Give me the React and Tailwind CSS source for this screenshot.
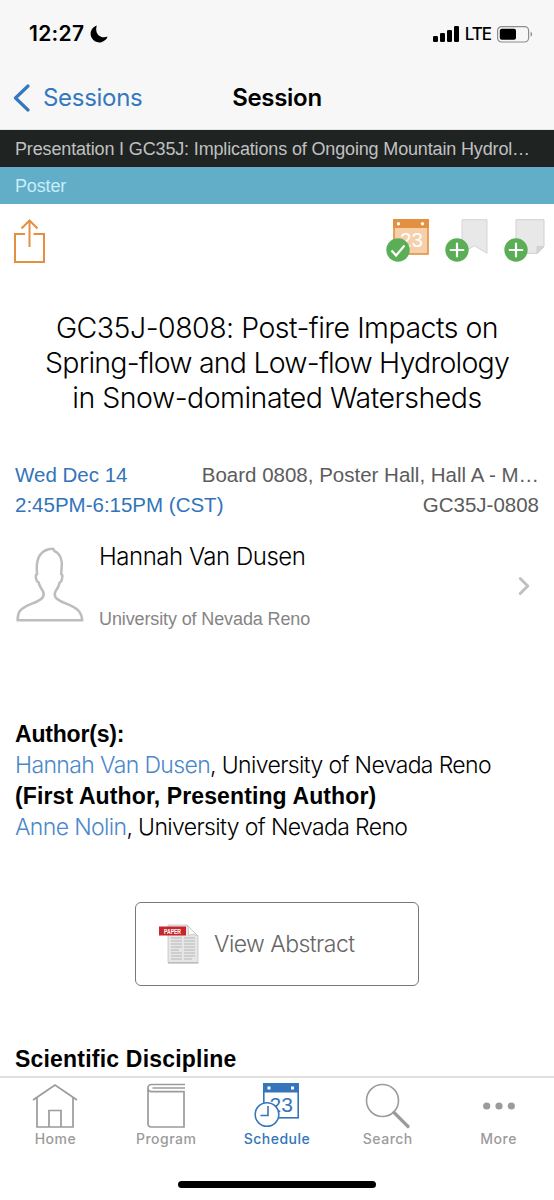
import { ChevronRight } from 'lucide-react';

const StatusBar = () => (
  <div className="flex h-[68px] items-center justify-between pl-[29px] pr-[21px]">
    <div className="flex items-center gap-[6px]">
      <span className="text-[21px] font-semibold leading-6 tracking-[0.3px]">12:27</span>
      <svg width="18" height="18" viewBox="0 0 18 18" fill="#000">
        <path d="M6.800.4A8.700 8.700 0 1 0 17.600 11.400C11.500 14.200 4 9.500 6.800.4Z" />
      </svg>
    </div>
    <div className="flex items-center gap-[6px]">
      <svg width="26" height="16" viewBox="0 0 26 16" fill="#000">
        <rect x="0" y="10" width="5" height="6" rx="1.3" />
        <rect x="7" y="7" width="5" height="9" rx="1.3" />
        <rect x="14" y="4" width="5" height="12" rx="1.3" />
        <rect x="21" y="0" width="5" height="16" rx="1.3" />
      </svg>
      <span className="text-[17px] font-medium leading-6 tracking-[-1px]">LTE</span>
      <svg width="36" height="17" viewBox="0 0 36 17">
        <rect x="0.6" y="0.6" width="31" height="15.4" rx="4" fill="none" stroke="#8d8d8d" strokeWidth="1.2" />
        <rect x="2.8" y="2.8" width="16.2" height="11" rx="2" fill="#000" />
        <path d="M33.6 5.8c2 .8 2 4.2 0 5Z" fill="#8d8d8d" />
      </svg>
    </div>
  </div>
);

const NavBar = () => (
  <div className="grid h-[60px] grid-cols-3 items-center">
    <button className="flex items-center gap-[13px] pl-[13px] text-[#3478bf]">
      <svg width="17" height="28" viewBox="0 0 17 28" fill="none" stroke="currentColor" strokeWidth="3.2" strokeLinecap="round" strokeLinejoin="round">
        <path d="M15 2 2.5 14 15 26" />
      </svg>
      <span className="text-[24px] leading-7 tracking-[-0.3px]">Sessions</span>
    </button>
    <h1 className="text-center text-[24px] font-semibold leading-7 tracking-[-0.3px]">Session</h1>
  </div>
);

const ShareIcon = () => (
  <svg width="33" height="45" viewBox="0 0 33 45" fill="none" stroke="#e39140" strokeWidth="2">
    <path d="M12 15H2v28h29V15H20.5" />
    <path d="M16.5 28V2M8.5 9.5l8-8 8 8" />
  </svg>
);

const Badge = ({ children }) => (
  <svg width="24" height="24" viewBox="0 0 24 24" className="absolute bottom-0 left-0">
    <circle cx="12" cy="12" r="11.7" fill="#5aae55" />
    <path d={children} fill="none" stroke="#fff" strokeWidth="2.2" />
  </svg>
);

const CHECK = 'M5.5 12.5l4.6 5 8.4-10';
const PLUS = 'M12 4.8v14.4M4.8 12h14.4';

const ActionIcons = () => (
  <div className="flex">
    <div className="relative h-[43px] w-[59px]">
      <svg width="43" height="43" viewBox="0 0 43 43">
        <rect x="8" y="1" width="34" height="34" fill="#f6cfab" stroke="#e39140" strokeWidth="1.6" />
        <rect x="7" y="0" width="36" height="9" fill="#e39140" />
        <circle cx="12.5" cy="4.7" r="1.7" fill="#fff" />
        <circle cx="36.5" cy="4.7" r="1.7" fill="#fff" />
        <text x="14" y="28" fill="#fff" fontSize="20.5" fontFamily="Liberation Sans">23</text>
      </svg>
      <Badge>{CHECK}</Badge>
    </div>
    <div className="relative h-[43px] w-[59px]">
      <svg width="43" height="43" viewBox="0 0 43 43" fill="#e8e8e9" stroke="#d4d4d6">
        <path d="M17 .7h25v33.6l-12.5-7.5L17 34Z" />
      </svg>
      <Badge>{PLUS}</Badge>
    </div>
    <div className="relative h-[43px] w-[41px]">
      <svg width="41" height="43" viewBox="0 0 41 43" fill="#e8e8e9" stroke="#d0d0d2">
        <path d="M12 .7h28v26.8l-7 6.9H12Z" />
        <path d="M40 27.5h-7v6.9Z" fill="#d4d4d6" />
      </svg>
      <Badge>{PLUS}</Badge>
    </div>
  </div>
);

const PersonIcon = () => (
  <svg width="68" height="75" viewBox="0 0 68 75" fill="none" stroke="#bdbdbd" strokeWidth="2.5" strokeLinejoin="round" className="mb-[3px]">
    <path d="M1.5 73.3C2 65 4 62.5 9 59.8c7-3.6 15-5.3 17.8-9.6 1.5-2.4 1-4.2.2-6-2-3-3.7-5.6-4.3-8.8-1.7-.3-3.2-4-2.9-6.6.1-1.6.8-1.6 1.300-1.600C19.500 14 23 5 32.500 2.300c2-.5 3.500-.7 4.700-.4l1.200 2.200c5.700 2.200 8 8.800 7.300 15.800l-.5 7.300c1.600.2 1.300 2 .8 4.600-.4 2-1.400 3.500-2.300 3.600-.6 3.200-2 6-4.200 8.800-1 2-1.400 3.600 0 6 2.800 4.300 10.800 6 17.800 9.600 5 2.700 8 5.200 9 13.500Z" />
  </svg>
);

const PaperIcon = () => (
  <svg width="40" height="40" viewBox="0 0 40 40">
    <path d="M9 1h19l11 11v26.5H9Z" fill="#e6e6e6" stroke="#c4c4c4" strokeWidth=".8" />
    <path d="M28 1c2 4 2 7 1 10.5 3-1.5 7-1.5 10 .5Z" fill="#fafafa" stroke="#b5b5b5" strokeWidth=".6" />
    <path d="M12 14h11M12 17h11M12 20h11M12 23h11M12 26h8M12 29h11M12 32h11M12 35h11M25 14h11M25 17h11M25 20h11M25 23h11M25 26h11M25 29h11M25 32h11M25 35h8" stroke="#c6c6c6" strokeWidth="1.3" />
    <path d="M9 39h30.5" stroke="#aaa" />
    <rect y="2.5" width="27" height="9" fill="#c8262c" />
    <text x="5" y="9.6" fill="#fff" fontSize="7" fontWeight="700" fontFamily="Liberation Sans" textLength="17" lengthAdjust="spacingAndGlyphs">PAPER</text>
  </svg>
);

const HomeIcon = () => (
  <svg width="46" height="46" viewBox="0 0 46 46" fill="none" stroke="currentColor" strokeWidth="1.7">
    <path d="M1 17 23 2l22 15M5 15v29h36V15" />
    <path d="M17 44V27.5h12V44" />
  </svg>
);

const ProgramIcon = () => (
  <svg width="46" height="46" viewBox="0 0 46 46" fill="none" stroke="currentColor" strokeWidth="1.7">
    <path d="M42 1.5H8.5a3.6 3.6 0 0 0 0 7.2H41V44H8a3 3 0 0 1-3-3V5" />
    <path d="M42 5H9.5" strokeWidth="1.3" />
  </svg>
);

const ScheduleIcon = () => (
  <svg width="46" height="46" viewBox="0 0 46 46" fill="none" stroke="currentColor" strokeWidth="1.6">
    <rect x="9.8" y="1.8" width="34.4" height="33" />
    <path d="M9 0h36v9.5H9Z" fill="currentColor" stroke="none" />
    <rect x="13.5" y="3.500" width="3" height="3" fill="#fff" stroke="none" />
    <rect x="37" y="3.500" width="3" height="3" fill="#fff" stroke="none" />
    <text x="15.5" y="28.5" fill="currentColor" stroke="none" fontSize="21" fontFamily="Liberation Sans">23</text>
    <circle cx="13" cy="31.500" r="11.8" fill="#fff" />
    <path d="M14 23v9.500H6.5" />
  </svg>
);

const SearchIcon = () => (
  <svg width="46" height="46" viewBox="0 0 46 46" fill="none" stroke="currentColor">
    <circle cx="17.5" cy="17.5" r="16" strokeWidth="1.6" />
    <path d="M29 29.5l14 14" strokeWidth="3.2" strokeLinecap="round" />
  </svg>
);

const MoreIcon = () => (
  <svg width="46" height="46" viewBox="0 0 46 46" fill="currentColor">
    <circle cx="10.7" cy="23" r="3.6" />
    <circle cx="23" cy="23" r="3.6" />
    <circle cx="35.3" cy="23" r="3.6" />
  </svg>
);

const tabs = [
  { label: 'Home', Icon: HomeIcon },
  { label: 'Program', Icon: ProgramIcon },
  { label: 'Schedule', Icon: ScheduleIcon, active: true },
  { label: 'Search', Icon: SearchIcon },
  { label: 'More', Icon: MoreIcon },
];

const TabBar = () => (
  <nav className="h-[124px] shrink-0 border-t-2 border-[#e0e0e1] bg-white">
    <div className="grid grid-cols-5 pt-[5px]">
      {tabs.map(({ label, Icon, active }) => (
        <button
          key={label}
          className={`flex flex-col items-center ${active ? 'text-[#3475bb]' : 'text-[#9b9b9b]'}`}
        >
          <Icon />
          <span className="text-[14px] font-medium leading-[20px] tracking-[0.5px]">{label}</span>
        </button>
      ))}
    </div>
    <div className="mx-auto mt-[32px] h-[7px] w-[198px] rounded-full bg-black" />
  </nav>
);

const App = () => {
  return (
    <div className="flex h-[1200px] w-[554px] flex-col overflow-hidden whitespace-nowrap bg-white font-['Inter',sans-serif] text-black">
      <header className="h-[130px] shrink-0 border-b border-[#e4e6e6] bg-[#f7f7f7]">
        <StatusBar />
        <NavBar />
      </header>

      <div className="h-[37px] shrink-0 bg-[#1f2322] px-[15px] font-['Liberation_Sans',sans-serif] text-[18px] leading-[39px] tracking-[-0.15px] text-[#c0c1c1]">
        Presentation I GC35J: Implications of Ongoing Mountain Hydrol…
      </div>
      <div className="h-[37px] shrink-0 bg-[#62adc8] px-[15px] font-['Liberation_Sans',sans-serif] text-[18px] leading-[39px] tracking-[-0.15px] text-[#c7eef9]">
        Poster
      </div>

      <main className="flex-1 overflow-hidden font-['Liberation_Sans',sans-serif]">
        <div className="flex items-start justify-between pl-[13px] pr-[9px] pt-[15px]">
          <ShareIcon />
          <ActionIcons />
        </div>

        <h2 className="mt-[46px] text-center font-['Inter',sans-serif] text-[28.5px] font-light leading-[35px] tracking-[-0.5px]">
          GC35J-0808: Post-fire Impacts on
          <br />
          <span className="tracking-[-0.78px]">Spring-flow and Low-flow Hydrology</span>
          <br />
          in Snow-dominated Watersheds
        </h2>

        <div className="mt-[45px] px-[15px] text-[20.5px] leading-[30px]">
          <div className="flex justify-between">
            <p className="text-[#3274b9]">Wed Dec 14</p>
            <p className="text-[#5c5c5c]">Board 0808, Poster Hall, Hall A - M…</p>
          </div>
          <div className="flex justify-between">
            <p className="text-[#3274b9]">2:45PM-6:15PM (CST)</p>
            <p className="text-[#5c5c5c]">GC35J-0808</p>
          </div>
        </div>

        <div className="mt-[21px] flex h-[90px] items-center pl-[16px] pr-[15px]">
          <PersonIcon />
          <div className="ml-[15px] flex-1">
            <p className="font-['Inter',sans-serif] text-[24px] font-light leading-[32px] tracking-[-0.48px]">Hannah Van Dusen</p>
            <p className="mt-[34px] text-[18px] leading-[24px] tracking-[-0.12px] text-[#858585]">University of Nevada Reno</p>
          </div>
          <ChevronRight className="h-[30px] w-[30px] text-[#c0c0c0]" strokeWidth={2.4} />
        </div>

        <div className="mt-[88px] pl-[15px] font-['Inter',sans-serif] text-[23px] font-light leading-[31px] tracking-[-0.63px]">
          <p className="font-['Liberation_Sans',sans-serif] font-bold tracking-[-0.2px]">Author(s):</p>
          <p><a className="text-[#4a88cb]">Hannah Van Dusen</a>, University of Nevada Reno</p>
          <p className="font-['Liberation_Sans',sans-serif] font-bold tracking-[0.12px]">(First Author, Presenting Author)</p>
          <p><a className="text-[#4a88cb]">Anne Nolin</a>, University of Nevada Reno</p>
        </div>

        <button className="mx-auto mt-[59px] flex h-[84px] w-[284px] items-center rounded-[6px] border-[1.5px] border-[#777] pl-[23px] text-[#666]">
          <PaperIcon />
          <span className="ml-[15px] font-['Inter',sans-serif] text-[23px] font-light tracking-[-0.55px]">View Abstract</span>
        </button>

        <h3 className="mt-[58px] pl-[15px] text-[23px] font-bold leading-[31px] tracking-[0.2px]">Scientific Discipline</h3>
      </main>

      <TabBar />
    </div>
  );
};

export default App;
